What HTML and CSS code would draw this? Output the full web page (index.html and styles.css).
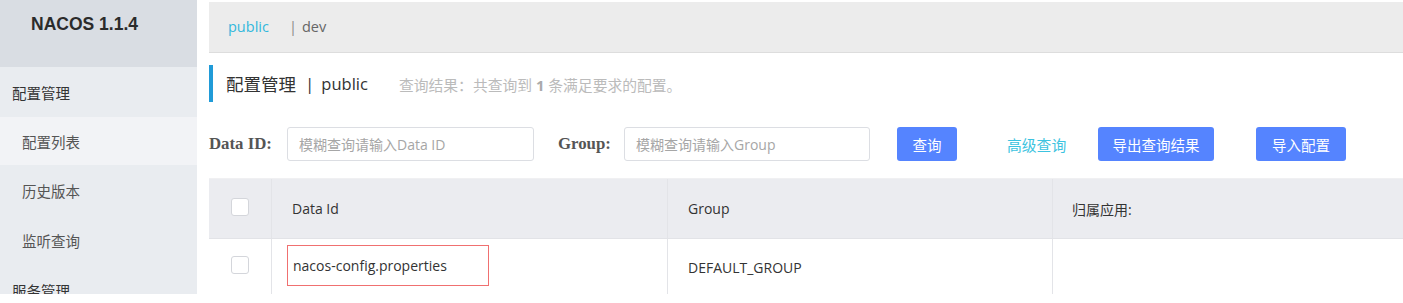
FILE: index.html
```html
<!DOCTYPE html>
<html lang="zh-CN">
<head>
<meta charset="utf-8">
<title>Nacos</title>
<link rel="stylesheet" href="styles.css">
</head>
<body>
<div class="app">
  <aside class="sidebar">
    <div class="brand">NACOS 1.1.4</div>
    <div class="nav-group">配置管理</div>
    <div class="nav-item active">配置列表</div>
    <div class="nav-item">历史版本</div>
    <div class="nav-item">监听查询</div>
    <div class="nav-group">服务管理</div>
  </aside>
  <main class="main">
    <div class="ns-bar">
      <span class="ns-link">public</span>
      <span class="ns-sep">|</span>
      <span class="ns-item">dev</span>
    </div>
    <div class="title-row">
      <span class="title-text">配置管理</span>
      <span class="title-sep">|</span>
      <span class="title-ns">public</span>
      <span class="result">查询结果：共查询到 <b>1</b> 条满足要求的配置。</span>
    </div>
    <div class="query-row">
      <label class="q-label q-label-id">Data ID:</label>
      <div class="q-input q-input-id">模糊查询请输入Data ID</div>
      <label class="q-label q-label-group">Group:</label>
      <div class="q-input q-input-group">模糊查询请输入Group</div>
      <button class="btn btn-query">查询</button>
      <span class="adv-link">高级查询</span>
      <button class="btn btn-export">导出查询结果</button>
      <button class="btn btn-import">导入配置</button>
    </div>
    <div class="table">
      <div class="tr thead">
        <div class="td c-check"><span class="checkbox"></span></div>
        <div class="td c-id">Data Id</div>
        <div class="td c-group">Group</div>
        <div class="td c-app">归属应用:</div>
      </div>
      <div class="tr tbody">
        <div class="td c-check"><span class="checkbox"></span></div>
        <div class="td c-id"><span class="mark">nacos-config.properties</span></div>
        <div class="td c-group">DEFAULT_GROUP</div>
        <div class="td c-app"></div>
      </div>
    </div>
  </main>
</div>
</body>
</html>
```

FILE: styles.css
```css
* { box-sizing: border-box; }
html, body { margin: 0; padding: 0; background: #fff; }
body {
  font-family: "Open Sans", "Noto Sans CJK SC", sans-serif;
  font-size: 14px;
  color: #333;
}
.app {
  display: flex;
  width: 1403px;
  height: 294px;
  overflow: hidden;
}
.sidebar {
  width: 197px;
  flex: none;
  background: #e9ecf0;
  font-size: 14.5px;
  color: #333;
}
.brand {
  height: 67px;
  background: #d9dde3;
  padding: 12px 0 0 31px;
  font-family: "Liberation Sans", "Noto Sans", sans-serif;
  font-weight: bold;
  font-size: 17.5px;
  color: #2b2b2b;
  line-height: 24px;
}
.nav-group, .nav-item {
  height: 50px;
  display: flex;
  align-items: center;
}
.nav-group { padding-left: 12px; color: #333; }
.nav-item { padding-left: 22px; color: #555; }
.nav-item.active { background: #f2f3f6; height: 48px; }

.main {
  flex: 1;
  margin-left: 12px;
  padding-top: 2px;
  min-width: 0;
}
.ns-bar {
  height: 51px;
  background: #ececec;
  border-bottom: 1px solid #dddddd;
  display: flex;
  align-items: center;
  padding-left: 19px;
  font-size: 14.5px;
  padding-bottom: 2px;
}
.ns-link { color: #33b8dc; }
.ns-sep { color: #8a8a8a; margin-left: 20px; }
.ns-item { color: #666; margin-left: 5px; }

.title-row {
  margin-top: 12px;
  height: 37px;
  border-left: 4px solid #209bd8;
  display: flex;
  align-items: center;
  padding-left: 13px;
}
.title-text { font-size: 17.5px; color: #333; }
.title-sep { font-size: 17px; color: #333; margin-left: 9px; }
.title-ns { font-size: 16.5px; color: #333; margin-left: 7px; }
.result {
  margin-left: 31px;
  font-size: 14.8px;
  color: #bbbbbb;
  padding-top: 2px;
}
.result b { color: #aaa; font-weight: bold; }

.query-row {
  margin-top: 25px;
  height: 34px;
  display: flex;
  align-items: center;
  white-space: nowrap;
}
.query-row > * { flex: none; }
.q-label {
  font-family: "Liberation Serif", serif;
  font-weight: bold;
  font-size: 16.8px;
  color: #555;
}
.q-label-id { width: 63px; }
.q-input {
  height: 34px;
  border: 1px solid #dcdee3;
  border-radius: 3px;
  padding-left: 11px;
  display: flex;
  align-items: center;
  color: #a6a6a6;
  font-size: 14px;
}
.q-input-id { width: 247px; margin-left: 15px; }
.q-label-group { margin-left: 24px; width: 52px; }
.q-input-group { width: 246px; margin-left: 14px; }
.btn {
  height: 34px;
  border: none;
  border-radius: 3px;
  background: #5584ff;
  color: #fff;
  font-family: "Open Sans", "Noto Sans CJK SC", sans-serif;
  font-size: 14.5px;
  padding: 0;
}
.btn-query { width: 60px; margin-left: 27px; }
.adv-link { margin-left: 50px; width: 59px; color: #3cc3e0; font-size: 14.8px; }
.btn-export { width: 116px; margin-left: 32px; }
.btn-import { width: 90px; margin-left: 42px; }

.table {
  margin-top: 17px;
  border-top: 1px solid #f0f0f2;
}
.tr { display: flex; }
.thead {
  height: 60px;
  background: #ebecf0;
  border-bottom: 1px solid #e2e3e7;
  color: #333;
}
.tbody { height: 56px; background: #fff; }
.td {
  display: flex;
  align-items: center;
  padding-left: 20px;
  border-right: 1px solid #e3e4e8;
  font-size: 14px;
}
.td:last-child { border-right: none; }
.c-check { width: 63px; padding-left: 0; justify-content: center; padding-bottom: 4px; }
.c-id { width: 396px; }
.c-group { width: 385px; }
.c-app { flex: 1; }
.thead .c-app { padding-left: 19px; }
.checkbox {
  width: 18px;
  height: 18px;
  background: #fff;
  border: 1px solid #d4d6db;
  border-radius: 3px;
}
.tbody .c-id { padding-left: 15px; }
.mark {
  display: flex;
  align-items: center;
  width: 202px;
  height: 41px;
  margin-bottom: 4px;
  border: 1px solid #f07070;
  padding-left: 5px;
}
```
